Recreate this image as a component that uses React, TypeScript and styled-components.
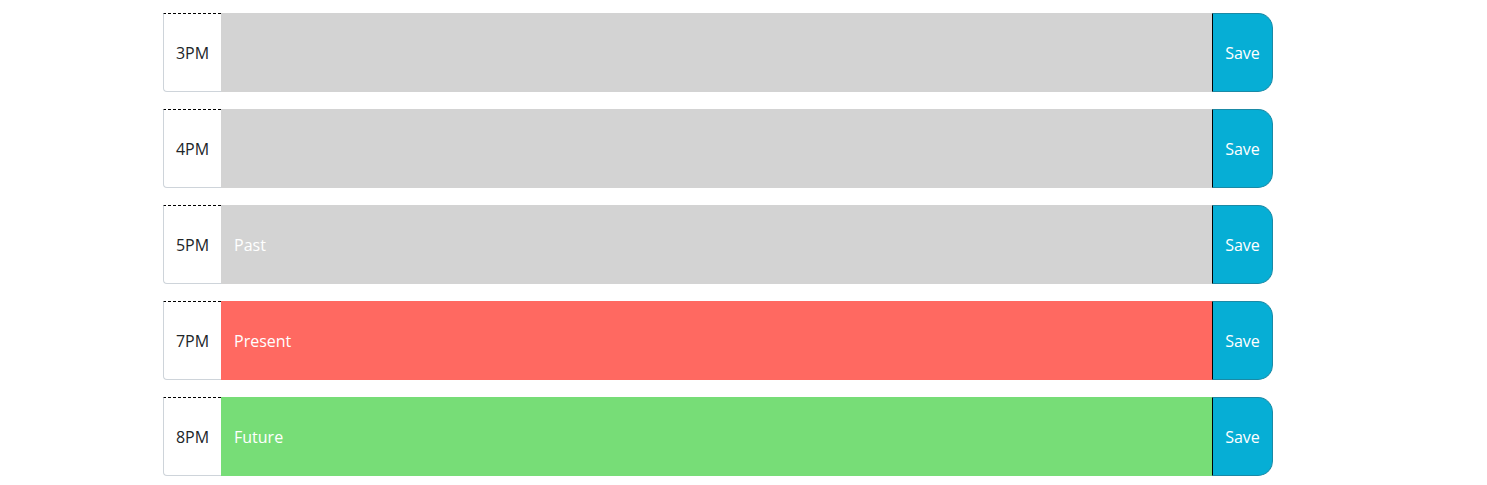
import React from "react";
import styled, { createGlobalStyle } from "styled-components";

const Global = createGlobalStyle`
  html, body { margin: 0; padding: 0; background: #ffffff; }
  body { font-family: "Open Sans", "Noto Sans", sans-serif; font-size: 16px; }
`;

const Container = styled.div`
  width: 1110px;
  margin-left: 163px;
  padding-top: 13px;
  display: flex;
  flex-direction: column;
  gap: 17px;
`;

const Row = styled.div`
  display: flex;
  height: 79px;
`;

const Hour = styled.div`
  box-sizing: border-box;
  width: 58px;
  display: flex;
  align-items: center;
  justify-content: center;
  background: #ffffff;
  color: #212529;
  font-size: 16px;
  border-top: 1px dashed #000000;
  border-left: 1px solid #ced4da;
  border-bottom: 1px solid #ced4da;
  border-bottom-left-radius: 4px;
`;

type Tense = "past" | "present" | "future";
const tenseColor: Record<Tense, string> = {
  past: "#d3d3d3",
  present: "#ff6961",
  future: "#77dd77",
};

const Entry = styled.div<{ $tense: Tense }>`
  flex: 1;
  display: flex;
  align-items: center;
  padding-left: 13px;
  background: ${(p) => tenseColor[p.$tense]};
  color: #ffffff;
  font-size: 16px;
`;

const SaveBtn = styled.button`
  box-sizing: border-box;
  width: 61px;
  height: 100%;
  background: #06aed5;
  color: #ffffff;
  font-family: "Open Sans", "Noto Sans", sans-serif;
  font-size: 16px;
  border: 1px solid #1a8aa6;
  border-left: 1px solid #000000;
  border-top-right-radius: 15px;
  border-bottom-right-radius: 15px;
  padding: 0;
  cursor: pointer;
`;

const rows: { hour: string; tense: Tense; text: string }[] = [
  { hour: "3PM", tense: "past", text: "" },
  { hour: "4PM", tense: "past", text: "" },
  { hour: "5PM", tense: "past", text: "Past" },
  { hour: "7PM", tense: "present", text: "Present" },
  { hour: "8PM", tense: "future", text: "Future" },
];

export default function App() {
  return (
    <>
      <Global />
      <Container>
        {rows.map((r) => (
          <Row key={r.hour}>
            <Hour>{r.hour}</Hour>
            <Entry $tense={r.tense}>{r.text}</Entry>
            <SaveBtn>Save</SaveBtn>
          </Row>
        ))}
      </Container>
    </>
  );
}
